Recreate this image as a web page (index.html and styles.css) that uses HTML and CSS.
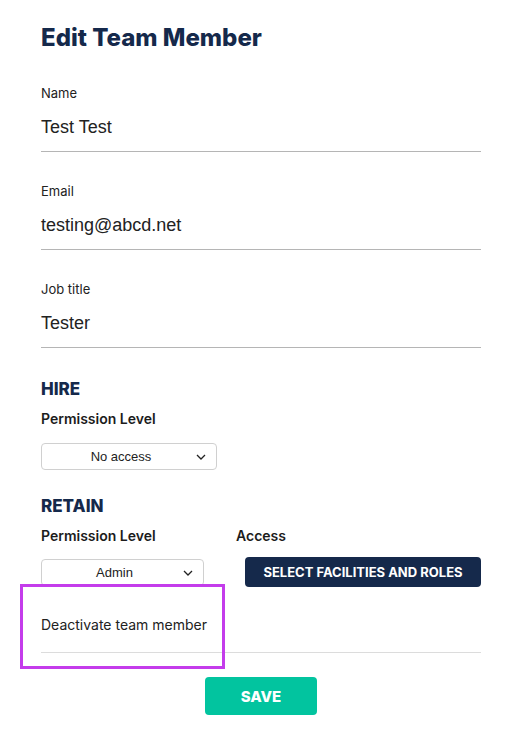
FILE: index.html
```html
<!DOCTYPE html>
<html lang="en">
<head>
  <meta charset="UTF-8" />
  <title>Edit Team Member</title>
  <link rel="stylesheet" href="styles.css">
</head>
<body>

  <div class="page">
    <h1>Edit Team Member</h1>

    <div class="field">
      <label>Name</label>
      <div class="value">Test Test</div>
    </div>
    <div class="field">
      <label>Email</label>
      <div class="value">testing@abcd.net</div>
    </div>
    <div class="field">
      <label>Job title</label>
      <div class="value">Tester</div>
    </div>

    <h2>HIRE</h2>
    <div class="perm-label">Permission Level</div>
    <div class="select hire-select">
      <span>No access</span>
      <svg class="chev" width="10" height="6" viewBox="0 0 10 6"><path d="M1 1l4 4 4-4" fill="none" stroke="#222" stroke-width="1.3"/></svg>
    </div>

    <h2 class="retain">RETAIN</h2>
    <div class="retain-row">
      <div class="col-perm">
        <div class="perm-label">Permission Level</div>
        <div class="select retain-select">
          <span>Admin</span>
          <svg class="chev" width="10" height="6" viewBox="0 0 10 6"><path d="M1 1l4 4 4-4" fill="none" stroke="#222" stroke-width="1.3"/></svg>
        </div>
      </div>
      <div class="col-access">
        <div class="perm-label">Access</div>
        <button class="select-btn">SELECT FACILITIES AND ROLES</button>
      </div>
    </div>

    <div class="deactivate">
      <span>Deactivate team member</span>
      <div class="highlight"></div>
    </div>

    <div class="actions">
      <button class="save-btn">SAVE</button>
    </div>
  </div>

</body>
</html>
```

FILE: styles.css
```css
body {
  margin: 0;
  background: white;
  font-family: Inter, "Liberation Sans", sans-serif;
  color: #222;
}
.page {
  padding: 22px 30px 0 41px;
}
h1 {
  margin: 0;
  font-size: 24px;
  font-weight: 800;
  color: #15294b;
  line-height: 32px;
}
.field {
  border-bottom: 1px solid #b5b5b5;
  margin-top: 31px;
  padding-bottom: 13px;
}
.field + .field {
  margin-top: 31px;
}
.field label {
  display: block;
  font-size: 13px;
  line-height: 16px;
  color: #222;
}
.field .value {
  font-family: "Liberation Sans", Arial, sans-serif;
  font-size: 18px;
  line-height: 22px;
  margin-top: 15px;
  color: #222;
}
h2 {
  margin: 29px 0 0;
  font-size: 17px;
  font-weight: 800;
  color: #15294b;
  line-height: 24px;
}
h2.retain {
  margin-top: 24px;
}
.perm-label {
  font-size: 14px;
  font-weight: 600;
  line-height: 18px;
  margin-top: 9px;
  color: #1c1c1c;
}
.select {
  position: relative;
  box-sizing: border-box;
  height: 27px;
  border: 1px solid #d0d0d0;
  border-radius: 4px;
  font-family: "Liberation Sans", Arial, sans-serif;
  font-size: 13px;
  display: flex;
  align-items: center;
  justify-content: center;
  margin-top: 15px;
}
.select span {
  margin-right: 16px;
}
.chev {
  position: absolute;
  right: 10px;
  top: 10px;
}
.hire-select {
  width: 176px;
}
.retain-row {
  display: flex;
}
.col-perm {
  width: 195px;
}
.retain-select {
  width: 163px;
  margin-top: 14px;
}
.col-access {
  flex: 1;
}
.select-btn {
  display: block;
  width: 236px;
  height: 30px;
  margin: 12px 0 0 9px;
  background: #15294b;
  color: white;
  border: none;
  border-radius: 4px;
  font-family: Inter, sans-serif;
  font-size: 13px;
  font-weight: 700;
}
.deactivate {
  position: relative;
  font-size: 14px;
  line-height: 18px;
  padding: 29px 0 18px;
  border-bottom: 1px solid #dcdcdc;
}
.highlight {
  position: absolute;
  left: -21px;
  top: -3px;
  width: 199px;
  height: 79px;
  border: 3px solid #c43ceb;
}
.actions {
  display: flex;
  justify-content: center;
  padding-top: 24px;
}
.save-btn {
  width: 112px;
  height: 38px;
  background: #02c49f;
  color: white;
  border: none;
  border-radius: 4px;
  font-family: Inter, sans-serif;
  font-size: 15px;
  font-weight: 800;
}
```
